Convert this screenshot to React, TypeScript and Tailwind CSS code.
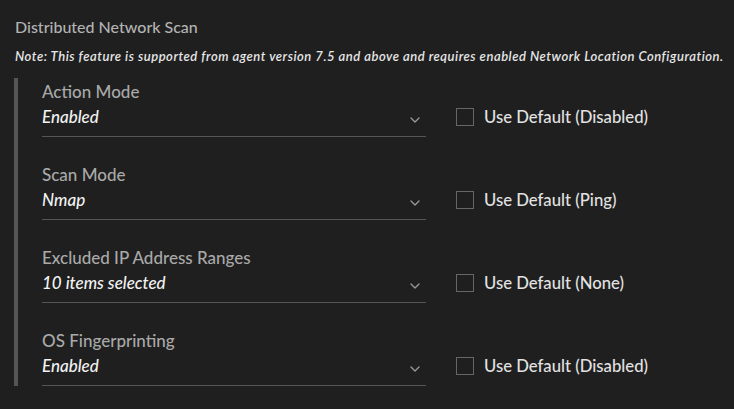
import React from 'react';

type Setting = {
  label: string;
  value: string;
  fallback: string;
};

const settings: Setting[] = [
  { label: 'Action Mode', value: 'Enabled', fallback: 'Use Default (Disabled)' },
  { label: 'Scan Mode', value: 'Nmap', fallback: 'Use Default (Ping)' },
  { label: 'Excluded IP Address Ranges', value: '10 items selected', fallback: 'Use Default (None)' },
  { label: 'OS Fingerprinting', value: 'Enabled', fallback: 'Use Default (Disabled)' },
];

function Chevron() {
  return (
    <svg width="10" height="6" viewBox="0 0 10 6" fill="none" className="shrink-0">
      <path d="M1 1l4 4 4-4" stroke="#9a9a9a" strokeWidth="1.3" strokeLinecap="round" strokeLinejoin="round" />
    </svg>
  );
}

function SettingRow({ setting }: { setting: Setting }) {
  return (
    <div className="flex items-start">
      <div className="w-[384px] border-b border-[#555]">
        <div className="text-[17px] leading-[20px] font-medium text-[#a9a9a9]">{setting.label}</div>
        <div className="mt-[4px] pb-[8px] flex items-center justify-between pr-[6px]">
          <span className="text-[17px] leading-[22px] italic font-medium text-[#f2f2f2]">{setting.value}</span>
          <span className="mt-[6px]"><Chevron /></span>
        </div>
      </div>
      <label className="ml-[30px] mt-[26px] flex items-center gap-[10px]">
        <span className="w-[18px] h-[18px] border border-[#666] bg-[#1f1f1f]" />
        <span className="text-[16.7px] leading-[18px] font-medium text-[#e2e2e2]">{setting.fallback}</span>
      </label>
    </div>
  );
}

export default function App() {
  return (
    <div
      className="min-h-screen bg-[#1f1f1f] pl-[15px] pt-[17px]"
      style={{ fontFamily: 'Lato, "Noto Sans", sans-serif' }}
    >
      {/* Section header */}
      <h2 className="text-[16px] leading-[20px] font-medium text-[#b3b3b3]">Distributed Network Scan</h2>
      <p className="mt-[11px] text-[13px] leading-[16px] italic font-semibold tracking-[0.53px] text-[#e6e6e6] whitespace-nowrap">
        Note: This feature is supported from agent version 7.5 and above and requires enabled Network Location Configuration.
      </p>

      {/* Settings group */}
      <div className="mt-[14px] ml-[-1px] border-l-4 border-[#555] pl-[24px] pt-[4px] flex flex-col gap-[28px]">
        {settings.map((s) => (
          <SettingRow key={s.label} setting={s} />
        ))}
      </div>
    </div>
  );
}
